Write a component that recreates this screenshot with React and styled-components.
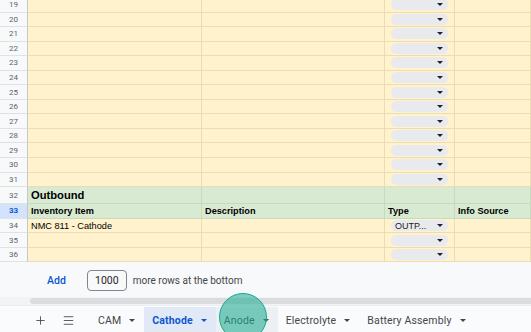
import { createGlobalStyle } from "styled-components";
import styled from "styled-components";
import { Plus, Menu } from "lucide-react";

const GlobalStyle = createGlobalStyle`
  html, body {
    margin: 0;
    padding: 0;
    width: 531px;
    height: 332px;
    overflow: hidden;
    background: #f8f9fa;
    font-family: Roboto, "Liberation Sans", Arial, sans-serif;
  }
  * { box-sizing: border-box; }
`;

const Page = styled.div`
  position: relative;
  display: flex;
  flex-direction: column;
  width: 531px;
  height: 332px;
  overflow: hidden;
`;

const Sheet = styled.div`
  height: 262px;
  flex: none;
  overflow: hidden;
`;

const Rows = styled.div`
  margin-top: -2px;
`;

const Row = styled.div`
  display: grid;
  grid-template-columns: 28px 174px 183px 70px 1fr;
  height: ${(p) => p.$h}px;
`;

const RowHead = styled.div`
  display: flex;
  align-items: center;
  justify-content: center;
  background: ${(p) => (p.$active ? "#d3e3fd" : "#f8f9fa")};
  color: ${(p) => (p.$active ? "#0b57d0" : "#5f6368")};
  font-weight: ${(p) => (p.$active ? 700 : 400)};
  font-size: 8px;
  border-right: 1px solid #c4c7c5;
  border-bottom: 1px solid #e1e3e1;
`;

const Cell = styled.div`
  display: flex;
  align-items: center;
  padding: 0 3px;
  background: ${(p) => (p.$green ? "#d9ead3" : "#fff2cc")};
  border-right: 1px solid ${(p) => (p.$green ? "#c6dabf" : "#eadcb4")};
  border-bottom: 1px solid ${(p) => (p.$green ? "#c6dabf" : "#eadcb4")};
  font-family: "Liberation Sans", Arial, sans-serif;
  font-size: ${(p) => (p.$big ? "11.2px" : "9.2px")};
  font-weight: ${(p) => (p.$bold ? 700 : 400)};
  color: #000;
  white-space: nowrap;
  overflow: hidden;
`;

const ChipCell = styled(Cell)`
  padding: 0 0 0 6px;
`;

const Chip = styled.div`
  display: flex;
  align-items: center;
  justify-content: space-between;
  width: 57px;
  height: 11px;
  padding: 0 5px 0 4px;
  border-radius: 6px;
  background: #e8eaed;
  font-family: "Liberation Sans", Arial, sans-serif;
  font-size: 9px;
  color: #202124;
`;

const Caret = styled.span`
  flex: none;
  width: 0;
  height: 0;
  border-left: 3px solid transparent;
  border-right: 3px solid transparent;
  border-top: 3.5px solid ${(p) => p.$c || "#202124"};
  margin-left: auto;
`;

const AddBar = styled.div`
  height: 35px;
  flex: none;
  display: flex;
  align-items: center;
  padding: 2px 0 0 47px;
  background: #f8f9fa;
  font-size: 10px;
  color: #444746;
`;

const AddLink = styled.span`
  color: #0b57d0;
  font-weight: 500;
  font-size: 10.5px;
  margin-right: 21px;
`;

const CountBox = styled.div`
  width: 40px;
  height: 21px;
  border: 1px solid #80868b;
  border-radius: 4px;
  display: flex;
  align-items: center;
  justify-content: center;
  color: #1f1f1f;
  font-size: 10.5px;
  margin-right: 6px;
  margin-top: -1px;
`;

const ScrollTrack = styled.div`
  height: 8px;
  flex: none;
  padding-left: 30px;
  background: #f1f3f4;
`;

const ScrollThumb = styled.div`
  height: 6px;
  margin-top: 1px;
  background: #dadce0;
  border-radius: 3px 0 0 3px;
`;

const TabBar = styled.div`
  flex: 1;
  display: flex;
  align-items: stretch;
  padding-left: 26px;
  background: #f9fbfd;
  border-top: 1px solid #eceef0;
`;

const IconButton = styled.div`
  width: 28px;
  display: flex;
  align-items: center;
  justify-content: center;
  padding-top: 2px;
  color: #444746;
`;

const Tabs = styled.div`
  display: flex;
  margin-left: 8px;
`;

const Tab = styled.div`
  display: flex;
  align-items: center;
  gap: 8px;
  padding: 2px 9px 0 8px;
  margin-top: 1px;
  font-size: 10.5px;
  font-weight: ${(p) => (p.$active ? 700 : 400)};
  letter-spacing: 0.15px;
  color: ${(p) => (p.$active ? "#0b57d0" : "#444746")};
  background: ${(p) =>
    p.$active ? "#e1e9f7" : p.$hover ? "#edf0f2" : "transparent"};
  white-space: nowrap;
`;

const Touch = styled.div`
  position: absolute;
  left: 219px;
  top: 293px;
  width: 48px;
  height: 48px;
  border-radius: 50%;
  background: rgba(22, 172, 142, 0.55);
  border: 1.5px solid #1aa98d;
  pointer-events: none;
`;

const blank = Array.from({ length: 13 }, (_, i) => 19 + i);

const tabs = [
  { name: "CAM" },
  { name: "Cathode", active: true },
  { name: "Anode", hover: true },
  { name: "Electrolyte" },
  { name: "Battery Assembly" },
];

const Dropdown = ({ value }) => (
  <Chip>
    {value}
    <Caret />
  </Chip>
);

const App = () => {
  return (
    <Page>
      <GlobalStyle />
      <Sheet>
        <Rows>
          {blank.map((n) => (
            <Row key={n} $h={14.55}>
              <RowHead>{n}</RowHead>
              <Cell />
              <Cell />
              <ChipCell>
                <Dropdown />
              </ChipCell>
              <Cell />
            </Row>
          ))}
          <Row $h={17}>
            <RowHead>32</RowHead>
            <Cell $green $big $bold>
              Outbound
            </Cell>
            <Cell $green />
            <Cell $green />
            <Cell $green />
          </Row>
          <Row $h={14.6}>
            <RowHead $active>33</RowHead>
            <Cell $green $bold>
              Inventory Item
            </Cell>
            <Cell $green $bold>
              Description
            </Cell>
            <Cell $green $bold>
              Type
            </Cell>
            <Cell $green $bold>
              Info Source
            </Cell>
          </Row>
          <Row $h={14.6}>
            <RowHead>34</RowHead>
            <Cell>NMC 811 - Cathode</Cell>
            <Cell />
            <ChipCell>
              <Dropdown value="OUTP..." />
            </ChipCell>
            <Cell />
          </Row>
          {[35, 36].map((n) => (
            <Row key={n} $h={14.5}>
              <RowHead>{n}</RowHead>
              <Cell />
              <Cell />
              <ChipCell>
                <Dropdown />
              </ChipCell>
              <Cell />
            </Row>
          ))}
        </Rows>
      </Sheet>

      <AddBar>
        <AddLink>Add</AddLink>
        <CountBox>1000</CountBox>
        more rows at the bottom
      </AddBar>

      <ScrollTrack>
        <ScrollThumb />
      </ScrollTrack>

      <TabBar>
        <IconButton>
          <Plus size={13} strokeWidth={1.6} />
        </IconButton>
        <IconButton>
          <Menu size={13} strokeWidth={1.6} />
        </IconButton>
        <Tabs>
          {tabs.map((t) => (
            <Tab key={t.name} $active={t.active} $hover={t.hover}>
              {t.name}
              <Caret $c={t.active ? "#0b57d0" : "#444746"} />
            </Tab>
          ))}
        </Tabs>
      </TabBar>

      <Touch />
    </Page>
  );
};

export default App;
